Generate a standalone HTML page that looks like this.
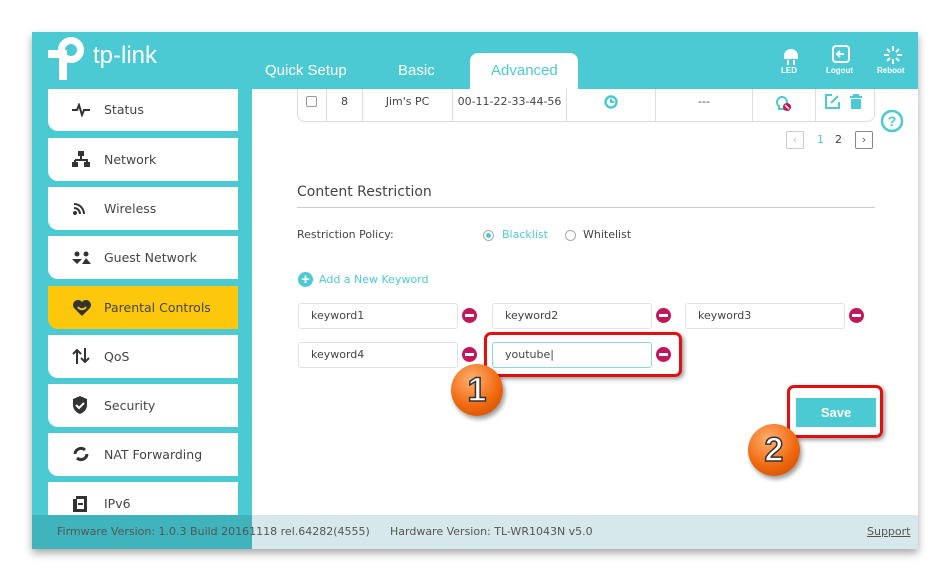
<!DOCTYPE html>
<html><head><meta charset="utf-8"><style>
*{margin:0;padding:0;box-sizing:border-box}
body{width:950px;height:582px;background:#fff;font-family:"DejaVu Sans","Liberation Sans",sans-serif;position:relative;overflow:hidden;color:#555}
.win{position:absolute;left:32px;top:32px;width:886px;height:517px;background:#4ccad4;box-shadow:0 4px 8px rgba(0,0,0,.35)}
.content{position:absolute;left:252px;top:89px;width:666px;height:426px;background:#fff}
.side{position:absolute;left:48px;width:190px;height:43px;background:#fff;border-radius:0 0 0 10px;font-size:12.5px;color:#444;line-height:43px;padding-left:56px}
.side svg{position:absolute;left:24px;top:13px}
.tab{position:absolute;top:62px;font-size:15px;color:#fff;font-family:"Liberation Sans",sans-serif}
.footer{position:absolute;left:32px;top:515px;width:886px;height:34px;background:#d7e8ea;font-size:11px;color:#555;line-height:34px}
.abs{position:absolute}
.inp{position:absolute;width:160px;height:26px;border:1px solid #e2e2e2;border-radius:3px;font-size:11px;color:#444;line-height:24px;padding-left:12px}
.minus{position:absolute;width:15px;height:15px;border-radius:50%;background:#c2185b}
.minus:after{content:"";position:absolute;left:3px;top:6px;width:9px;height:3px;background:#fff}
.td{position:absolute;top:89px;height:32px;border-left:1px solid #ddd;font-size:11px;color:#444;line-height:26px;text-align:center}
.ball{position:absolute;width:52px;height:52px;border-radius:50%;background:radial-gradient(circle at 40% 30%,#ffb070,#f06a10 55%,#c84400);box-shadow:2px 3px 5px rgba(0,0,0,.4);color:#fff;font:bold 34px "Liberation Sans",sans-serif;text-align:center;line-height:52px;-webkit-text-stroke:1.5px #333}
.red{position:absolute;border:3px solid #e01010;border-radius:7px;box-shadow:2px 2px 4px rgba(0,0,0,.4)}
</style></head><body>
<div class="win"></div>
<div class="content"></div>
<!-- logo -->
<svg class="abs" style="left:48px;top:36px" width="40" height="44" viewBox="0 0 40 44"><circle cx="23" cy="14" r="9.5" fill="none" stroke="#fff" stroke-width="7"/><rect x="11" y="14" width="8" height="30" fill="#fff"/><rect x="0" y="14" width="19" height="8" fill="#fff"/></svg>
<div class="abs" style="left:93px;top:42px;font:24px 'Liberation Sans',sans-serif;color:#fff">tp-link</div>
<div class="tab" style="left:265px">Quick Setup</div>
<div class="tab" style="left:398px">Basic</div>
<div class="abs" style="left:470px;top:53px;width:108px;height:37px;background:#fff;border-radius:8px 8px 0 0"></div>
<div class="tab" style="left:491px;color:#4ccad4">Advanced</div>
<!-- header icons -->
<svg class="abs" style="left:782px;top:45px" width="18" height="20"><path d="M2 11a7 7 0 0 1 14 0v3H2z" fill="#fff"/><rect x="5" y="15" width="2" height="5" fill="#fff"/><rect x="11" y="15" width="2" height="5" fill="#fff"/></svg>
<svg class="abs" style="left:832px;top:45px" width="18" height="18"><rect x="1" y="1" width="16" height="16" rx="3" fill="none" stroke="#fff" stroke-width="2"/><path d="M12 9H6m2-3-3 3 3 3" stroke="#fff" stroke-width="2" fill="none"/></svg>
<svg class="abs" style="left:883px;top:45px" width="20" height="20" stroke="#fff" stroke-width="2"><path d="M10 1v5M10 14v5M1 10h5M14 10h5M4 4l3 3M13 13l3 3M16 4l-3 3M4 16l3-3"/></svg>
<div class="abs" style="left:781px;top:66px;font:bold 8px 'Liberation Sans';color:#fff">LED</div>
<div class="abs" style="left:826px;top:66px;font:bold 8px 'Liberation Sans';color:#fff">Logout</div>
<div class="abs" style="left:877px;top:66px;font:bold 8px 'Liberation Sans';color:#fff">Reboot</div>
<!-- sidebar -->
<div class="side" style="top:89px;height:42px;line-height:42px"><svg width="18" height="14" style="top:14px"><path d="M0 7h5l2-5 3 10 2-5h6" stroke="#333" stroke-width="2" fill="none"/></svg>Status</div>
<div class="side" style="top:138px"><svg width="18" height="16" style="top:13px"><rect x="6" y="0" width="6" height="5" fill="#333"/><path d="M9 5v4M3 9h12v3M3 9v3" stroke="#333" stroke-width="2" fill="none"/><rect x="0" y="11" width="6" height="5" fill="#333"/><rect x="12" y="11" width="6" height="5" fill="#333"/></svg>Network</div>
<div class="side" style="top:187px"><svg width="16" height="16"><path d="M2 4a10 10 0 0 1 10 10M2 8a6 6 0 0 1 6 6" stroke="#333" stroke-width="2" fill="none"/><circle cx="3" cy="13" r="2" fill="#333"/></svg>Wireless</div>
<div class="side" style="top:236px"><svg width="20" height="14" style="top:15px"><circle cx="5" cy="3" r="2.5" fill="#333"/><circle cx="14" cy="3" r="2.5" fill="#333"/><path d="M0 8l5 5 5-5zM10 13l4-6 5 6z" fill="#333"/></svg>Guest Network</div>
<div class="side" style="top:286px;background:#fdc70c"><svg width="20" height="16" style="top:14px"><path d="M10 16 2 8a5 5 0 0 1 8-6 5 5 0 0 1 8 6z" fill="#333"/><path d="M6 7c2 3 6 3 8 0" stroke="#fdc70c" stroke-width="2" fill="none"/></svg>Parental Controls</div>
<div class="side" style="top:335px"><svg width="18" height="16"><path d="M5 16V2M1 6l4-4 4 4M13 0v14M9 10l4 4 4-4" stroke="#333" stroke-width="2" fill="none"/></svg>QoS</div>
<div class="side" style="top:384px"><svg width="16" height="18" style="top:12px"><path d="M8 0l7 3v6c0 5-4 8-7 9-3-1-7-4-7-9V3z" fill="#333"/><path d="M4 9l3 3 5-5" stroke="#fff" stroke-width="2" fill="none"/></svg>Security</div>
<div class="side" style="top:433px"><svg width="18" height="18" style="top:12px"><path d="M3 9a6 6 0 0 1 10-4M15 9a6 6 0 0 1-10 4" stroke="#333" stroke-width="3" fill="none"/></svg>NAT Forwarding</div>
<div class="side" style="top:482px;height:33px;border-radius:0"><svg width="16" height="18" style="top:13px"><path d="M1 4h3V1h11v16H1z" fill="#333"/><rect x="5" y="4" width="7" height="10" fill="#fff"/><path d="M6 9h5" stroke="#333" stroke-width="2"/></svg>IPv6</div>
<!-- table row -->
<div class="abs" style="left:297px;top:89px;width:578px;height:33px;border:1px solid #ddd;border-top:none;border-radius:0 0 8px 8px"></div>
<div class="abs" style="left:306px;top:96px;width:11px;height:11px;border:1px solid #999;border-radius:2px"></div>
<div class="td" style="left:326px;width:36px">8</div>
<div class="td" style="left:362px;width:90px">Jim's PC</div>
<div class="td" style="left:452px;width:114px">00-11-22-33-44-56</div>
<div class="td" style="left:566px;width:89px"><svg width="14" height="14" style="margin-top:6px"><circle cx="7" cy="7" r="5.5" stroke="#4ccad4" stroke-width="2.5" fill="none"/><path d="M7 4v3h3" stroke="#4ccad4" stroke-width="2" fill="none"/></svg></div>
<div class="td" style="left:655px;width:97px">---</div>
<div class="td" style="left:752px;width:63px"><svg width="18" height="18" style="margin-top:5px"><path d="M4 12a5 5 0 1 1 6 0v3H4z" stroke="#4ccad4" stroke-width="2" fill="none"/><circle cx="12" cy="13" r="4" fill="#c2185b"/><path d="M10 11l4 4" stroke="#fff" stroke-width="1.5"/></svg></div>
<div class="td" style="left:815px;width:59px;text-align:left;padding-left:9px"><svg width="40" height="16" style="margin-top:4px"><path d="M7 2H1v13h13V9" stroke="#4ccad4" stroke-width="2" fill="none"/><path d="M6 10l7-7" stroke="#4ccad4" stroke-width="2"/><path d="M28 1h6v2h3v2H25V3h3zM26 6h10v10H26z" fill="#4ccad4"/></svg></div>
<!-- pagination -->
<div class="abs" style="left:786px;top:131px;width:18px;height:18px;border:1px solid #ccc;border-radius:2px;color:#bbb;font-size:11px;text-align:center;line-height:16px">&lsaquo;</div>
<div class="abs" style="left:817px;top:133px;font-size:11px;color:#4ccad4">1</div>
<div class="abs" style="left:835px;top:133px;font-size:11px;color:#444">2</div>
<div class="abs" style="left:855px;top:131px;width:18px;height:18px;border:1px solid #888;border-radius:2px;color:#555;font-size:11px;text-align:center;line-height:16px">&rsaquo;</div>
<svg class="abs" style="left:880px;top:109px" width="24" height="24"><circle cx="12" cy="12" r="10" stroke="#4ccad4" stroke-width="2.5" fill="none"/><text x="12" y="17" text-anchor="middle" font-size="14" font-weight="bold" fill="#4ccad4" font-family="Liberation Sans">?</text></svg>
<!-- content restriction -->
<div class="abs" style="left:297px;top:184px;font-size:14px;color:#444">Content Restriction</div>
<div class="abs" style="left:297px;top:207px;width:578px;height:1px;background:#ccc"></div>
<div class="abs" style="left:297px;top:228px;font-size:11px;color:#444">Restriction Policy:</div>
<div class="abs" style="left:483px;top:230px;width:11px;height:11px;border:1px solid #aaa;border-radius:50%"><div style="margin:2px;width:5px;height:5px;border-radius:50%;background:#4ccad4"></div></div>
<div class="abs" style="left:502px;top:228px;font-size:11px;color:#4ccad4">Blacklist</div>
<div class="abs" style="left:565px;top:230px;width:11px;height:11px;border:1px solid #aaa;border-radius:50%"></div>
<div class="abs" style="left:583px;top:228px;font-size:11px;color:#444">Whitelist</div>
<div class="abs" style="left:298px;top:272px;width:15px;height:15px;border-radius:50%;background:#4ccad4;color:#fff;font:bold 15px/15px 'Liberation Sans';text-align:center">+</div>
<div class="abs" style="left:319px;top:273px;font-size:11px;color:#4ccad4">Add a New Keyword</div>
<div class="inp" style="left:298px;top:303px">keyword1</div><div class="minus" style="left:462px;top:308px"></div>
<div class="inp" style="left:492px;top:303px">keyword2</div><div class="minus" style="left:656px;top:308px"></div>
<div class="inp" style="left:685px;top:303px">keyword3</div><div class="minus" style="left:849px;top:308px"></div>
<div class="inp" style="left:298px;top:342px">keyword4</div><div class="minus" style="left:462px;top:347px"></div>
<div class="inp" style="left:492px;top:342px;border-color:#8fd5db">youtube|</div><div class="minus" style="left:656px;top:347px"></div>
<div class="red" style="left:484px;top:332px;width:198px;height:45px"></div>
<div class="abs" style="left:796px;top:398px;width:80px;height:29px;background:#4ccad4;color:#fff;font:bold 13px/29px 'Liberation Sans';text-align:center">Save</div>
<div class="red" style="left:787px;top:385px;width:96px;height:53px"></div>
<div class="ball" style="left:451px;top:364px">1</div>
<div class="ball" style="left:748px;top:424px">2</div>
<!-- footer -->
<div class="footer"><div class="abs" style="left:0;top:0;width:220px;height:34px;background:#40b4bd"></div><span class="abs" style="left:25px">Firmware Version: 1.0.3 Build 20161118 rel.64282(4555)</span><span class="abs" style="left:358px">Hardware Version: TL-WR1043N v5.0</span><span class="abs" style="left:835px;text-decoration:underline">Support</span></div>
</body></html>
